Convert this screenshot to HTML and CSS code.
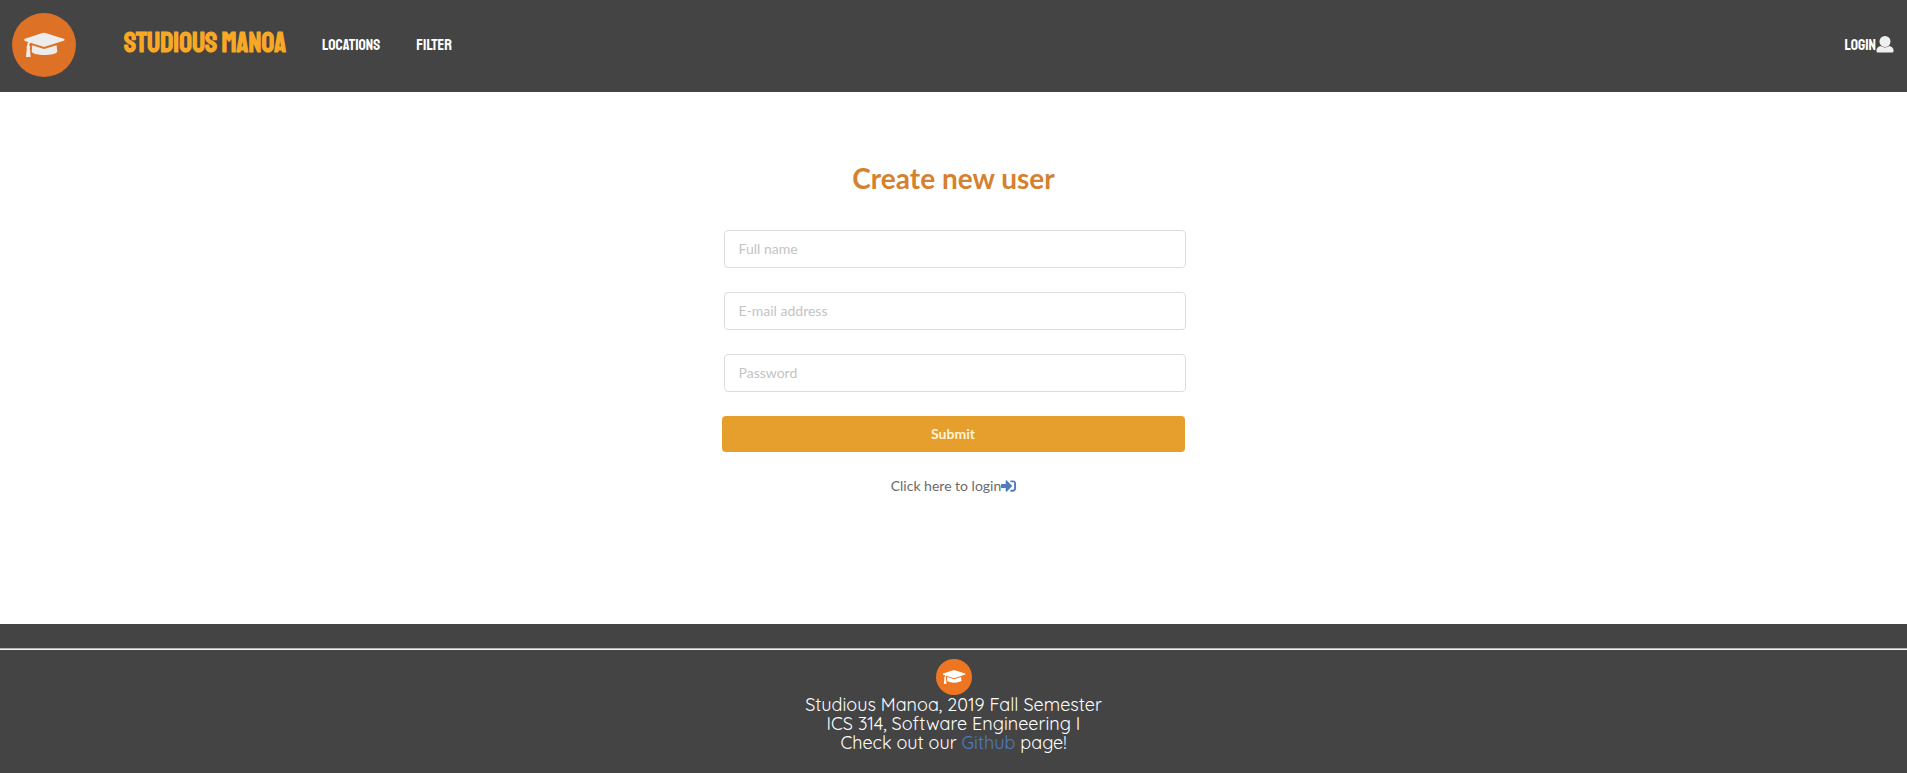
FILE: index.html
```html
<!DOCTYPE html>
<html lang="en">
<head>
<meta charset="utf-8">
<title>Studious Manoa</title>
<link rel="stylesheet" href="styles.css">
</head>
<body>
<svg class="defs" aria-hidden="true">
  <symbol id="cap" viewBox="0 0 64 64">
    <circle class="disc" cx="32" cy="32" r="32"/>
    <path class="hat" d="M30.500 20.100Q32 19.600 33.500 20.100L51.700 25.700Q53.600 26.700 51.700 27.700L33.500 33.600Q32 34.100 30.500 33.600L18.500 29.800Q17.300 30.600 17.200 32.300Q18.800 33.300 17.800 35.200L18.700 44H14L14.800 35.200Q13.900 33.300 15.300 32.300Q15.300 30.200 16.300 29.100L12.800 28Q11.200 26.800 12.800 25.700Z"/>
    <path class="hat" d="M20.200 32.200L32 36.100L44.600 32.200L45.300 38.800C42.500 43.100 22.500 43.100 19.700 38.800Z"/>
  </symbol>
</svg>
<header class="navbar">
  <a class="logo" href="#" aria-label="Home"><svg><use href="#cap"/></svg></a>
  <a class="brand" href="#">STUDIOUS MANOA</a>
  <nav class="links">
    <a href="#">LOCATIONS</a>
    <a href="#">FILTER</a>
  </nav>
  <a class="login" href="#">LOGIN<svg viewBox="0 0 18 17" aria-hidden="true"><circle cx="9" cy="5.500" r="5.500"/><path d="M4.500 10Q9 12.800 13.500 10Q17.600 11.200 17.600 15Q17.600 16.500 16 16.500H2Q.4 16.500 .4 15Q.4 11.200 4.500 10Z"/></svg></a>
</header>
<main class="content">
  <h1>Create new user</h1>
  <form class="signup">
    <div class="fields">
      <input type="text" placeholder="Full name" aria-label="Full name">
      <input type="email" placeholder="E-mail address" aria-label="E-mail address">
      <input type="password" placeholder="Password" aria-label="Password">
    </div>
    <div class="actions"><button type="submit">Submit</button></div>
  </form>
  <p class="switch">Click here to login<a href="#" aria-label="Login"><svg viewBox="0 64 512 384" aria-hidden="true"><path d="M416 448h-84c-6.600 0-12-5.400-12-12v-40c0-6.600 5.400-12 12-12h84c17.700 0 32-14.300 32-32V160c0-17.700-14.300-32-32-32h-84c-6.600 0-12-5.400-12-12V76c0-6.600 5.400-12 12-12h84c53 0 96 43 96 96v192c0 53-43 96-96 96zm-47-209L201 71c-15-15-41-4.500-41 17v96H24c-13.300 0-24 10.700-24 24v96c0 13.300 10.700 24 24 24h136v96c0 21.500 26 32 41 17l168-168c9.300-9.400 9.300-24.600 0-34z"/></svg></a></p>
</main>
<footer class="footer">
  <hr>
  <svg class="mark" aria-hidden="true"><use href="#cap"/></svg>
  <p>Studious Manoa, 2019 Fall Semester<br>ICS 314, Software Engineering I<br>Check out our <a href="#">Github</a> page!</p>
</footer>
</body>
</html>
```
FILE: styles.css
```css
* { box-sizing: border-box; }
body {
  margin: 0;
  min-height: 100vh;
  display: flex;
  flex-direction: column;
  background: #fff;
  color: #6b6b6b;
  font: 14px/20px Lato, sans-serif;
}
a { color: #4f7bc0; text-decoration: none; }
.defs { position: absolute; width: 0; height: 0; }
.disc { fill: #ee7623; }
.hat { fill: #fff; }

.navbar {
  display: flex;
  align-items: center;
  min-height: 92px;
  padding: 0 13px 2px 12px;
  background: #444;
  font-family: Staatliches, "Bebas Neue", "Roboto Condensed", sans-serif;
}
.navbar a { color: #fff; }
.logo { display: flex; margin-right: 48px; opacity: .9; }
.logo svg { width: 64px; height: 64px; }
.navbar .brand {
  padding-bottom: 4px;
  color: #f9a825;
  font-size: 28px;
  line-height: 28px;
  font-weight: 700;
}
.links { display: flex; gap: 36px; margin-left: 36px; font-size: 16px; }
.login { display: flex; align-items: center; margin-left: auto; font-size: 16px; }
.login svg { width: 18px; height: 17px; margin-bottom: 2px; fill: #f0f0f0; }

.content {
  flex: 1;
  display: flex;
  flex-direction: column;
  align-items: center;
  padding: 68px 16px;
}
h1 {
  margin: 0 0 34px;
  color: #d5812f;
  font-size: 28px;
  line-height: 36px;
  font-weight: 700;
}
.signup { width: 100%; max-width: 464px; }
.fields { display: grid; gap: 24px; padding-left: 2px; }
.fields input {
  width: 100%;
  height: 38px;
  padding: 0 14px 2px;
  border: 1px solid #dcdddd;
  border-radius: 4px;
  background: #fff;
  font: inherit;
}
.fields input::placeholder { color: #c4c4c4; opacity: 1; }
.actions { padding: 24px 1px 0 0; }
.actions button {
  display: block;
  width: 100%;
  height: 36px;
  border: 0;
  border-radius: 4px;
  background: #e69f2d;
  color: #fff3d6;
  font: 700 14px/20px Lato, sans-serif;
}
.switch { display: flex; align-items: center; margin: 24px 0 0; }
.switch a { display: flex; }
.switch svg { width: 15px; height: 12px; fill: #4f7bc0; }

.footer {
  display: flex;
  flex-direction: column;
  align-items: center;
  padding: 24px 0 14px;
  background: #444;
  color: #fff;
  font: 18px/19px Quicksand, Lato, sans-serif;
  text-align: center;
}
.footer hr {
  width: 100%;
  margin: 0 0 9px;
  border: 0;
  border-top: 1px solid #b5b5b5;
  border-bottom: 1px solid #f2f2f2;
}
.mark { width: 36px; height: 36px; }
.footer p { margin: 0; padding-bottom: 7px; }
```
